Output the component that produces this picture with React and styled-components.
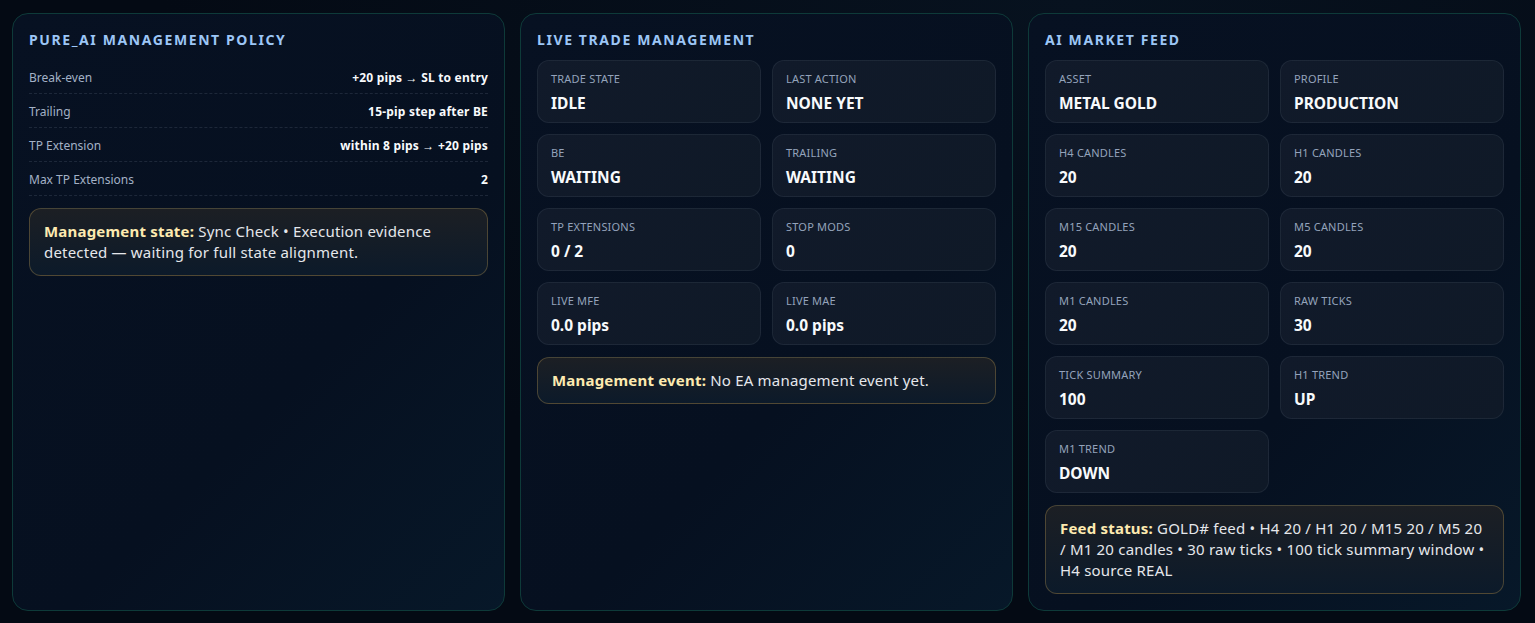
import styled, { createGlobalStyle } from "styled-components";

const GlobalStyle = createGlobalStyle`
  * { box-sizing: border-box; }
  html, body {
    margin: 0;
    padding: 0;
    background: #040a14;
    font-family: "Noto Sans", "Open Sans", sans-serif;
    color: #e5e7eb;
  }
`;

const policy = [
  { label: "Break-even", value: "+20 pips → SL to entry" },
  { label: "Trailing", value: "15-pip step after BE" },
  { label: "TP Extension", value: "within 8 pips → +20 pips" },
  { label: "Max TP Extensions", value: "2" },
];

const trade = [
  { label: "Trade State", value: "IDLE" },
  { label: "Last Action", value: "NONE YET" },
  { label: "BE", value: "WAITING" },
  { label: "Trailing", value: "WAITING" },
  { label: "TP Extensions", value: "0 / 2" },
  { label: "Stop Mods", value: "0" },
  { label: "Live MFE", value: "0.0 pips" },
  { label: "Live MAE", value: "0.0 pips" },
];

const feed = [
  { label: "Asset", value: "METAL GOLD" },
  { label: "Profile", value: "PRODUCTION" },
  { label: "H4 Candles", value: "20" },
  { label: "H1 Candles", value: "20" },
  { label: "M15 Candles", value: "20" },
  { label: "M5 Candles", value: "20" },
  { label: "M1 Candles", value: "20" },
  { label: "Raw Ticks", value: "30" },
  { label: "Tick Summary", value: "100" },
  { label: "H1 Trend", value: "UP" },
  { label: "M1 Trend", value: "DOWN" },
];

export default function App() {
  return (
    <>
      <GlobalStyle />
      <Page>
        <Panel>
          <Title>PURE_AI Management Policy</Title>
          <RowList>
            {policy.map((p) => (
              <Row key={p.label}>
                <RowLabel>{p.label}</RowLabel>
                <RowValue>{p.value}</RowValue>
              </Row>
            ))}
          </RowList>
          <Note>
            <strong>Management state:</strong> Sync Check • Execution evidence
            detected — waiting for full state alignment.
          </Note>
        </Panel>

        <Panel>
          <Title>Live Trade Management</Title>
          <StatGrid>
            {trade.map((s) => (
              <Stat key={s.label}>
                <StatLabel>{s.label}</StatLabel>
                <StatValue>{s.value}</StatValue>
              </Stat>
            ))}
          </StatGrid>
          <Note>
            <strong>Management event:</strong> No EA management event yet.
          </Note>
        </Panel>

        <Panel>
          <Title>AI Market Feed</Title>
          <StatGrid>
            {feed.map((s) => (
              <Stat key={s.label}>
                <StatLabel>{s.label}</StatLabel>
                <StatValue>{s.value}</StatValue>
              </Stat>
            ))}
          </StatGrid>
          <Note>
            <strong>Feed status:</strong> GOLD# feed • H4 20 / H1 20 / M15 20 / M5 20
            / M1 20 candles • 30 raw ticks • 100 tick summary window • H4 source REAL
          </Note>
        </Panel>
      </Page>
    </>
  );
}

const Page = styled.div`
  display: grid;
  grid-template-columns: repeat(3, 1fr);
  gap: 15px;
  align-items: stretch;
  padding: 13px 14px 12px 12px;
  min-height: 100vh;
  background: radial-gradient(ellipse at 70% 0%, #07121f 0%, #040a14 60%);
`;

const Panel = styled.section`
  display: flex;
  flex-direction: column;
  padding: 16px;
  border: 1px solid #0e3a39;
  border-radius: 16px;
  background: linear-gradient(135deg, #071122 0%, #061020 60%, #071829 100%);
`;

const Title = styled.h2`
  margin: 0 0 10px;
  font-size: 14px;
  line-height: 20px;
  font-weight: 700;
  letter-spacing: 1.6px;
  text-transform: uppercase;
  color: #9cc6f6;
`;

const RowList = styled.div`
  display: flex;
  flex-direction: column;
`;

const Row = styled.div`
  display: flex;
  justify-content: space-between;
  align-items: center;
  height: 34px;
  padding-top: 1px;
  border-bottom: 1px dashed rgba(148, 163, 184, 0.16);
`;

const RowLabel = styled.span`
  font-size: 12px;
  color: #a3b1c6;
`;

const RowValue = styled.span`
  font-size: 12px;
  font-weight: 700;
  letter-spacing: 0.2px;
  color: #f8fafc;
`;

const StatGrid = styled.div`
  display: grid;
  grid-template-columns: 1fr 1fr;
  gap: 11px;
`;

const Stat = styled.div`
  display: flex;
  flex-direction: column;
  gap: 7px;
  height: 63px;
  padding: 11px 13px;
  border: 1px solid rgba(148, 163, 184, 0.1);
  border-radius: 12px;
  background: linear-gradient(135deg, #111a2a 0%, #0f1927 100%);
`;

const StatLabel = styled.span`
  font-size: 11px;
  line-height: 14px;
  text-transform: uppercase;
  letter-spacing: 0.2px;
  color: #94a3bb;
`;

const StatValue = styled.span`
  font-size: 15.5px;
  line-height: 20px;
  font-weight: 700;
  color: #f8fafc;
`;

const Note = styled.div`
  margin-top: 12px;
  padding: 12px 14px;
  font-size: 15px;
  line-height: 21px;
  letter-spacing: 0.2px;
  color: #e5e7eb;
  border: 1px solid rgba(180, 150, 80, 0.35);
  border-radius: 12px;
  background: linear-gradient(180deg, #1c1f24 0%, #0c1a2a 100%);

  strong {
    font-weight: 700;
    color: #fdeab0;
  }
`;
